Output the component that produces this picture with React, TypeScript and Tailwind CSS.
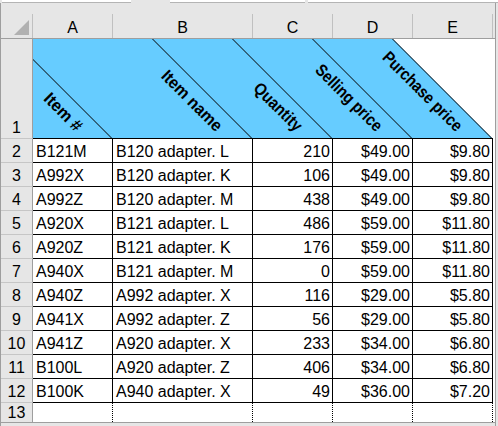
const rows: [string, string, number, string, string][] = [
  ["B121M", "B120 adapter. L", 210, "$49.00", "$9.80"],
  ["A992X", "B120 adapter. K", 106, "$49.00", "$9.80"],
  ["A992Z", "B120 adapter. M", 438, "$49.00", "$9.80"],
  ["A920X", "B121 adapter. L", 486, "$59.00", "$11.80"],
  ["A920Z", "B121 adapter. K", 176, "$59.00", "$11.80"],
  ["A940X", "B121 adapter. M", 0, "$59.00", "$11.80"],
  ["A940Z", "A992 adapter. X", 116, "$29.00", "$5.80"],
  ["A941X", "A992 adapter. Z", 56, "$29.00", "$5.80"],
  ["A941Z", "A920 adapter. X", 233, "$34.00", "$6.80"],
  ["B100L", "A920 adapter. Z", 406, "$34.00", "$6.80"],
  ["B100K", "A940 adapter. X", 49, "$36.00", "$7.20"],
]

// rotated headers: end of baseline sits 36px left of each column's bottom-right corner
const headers = [
  { label: "Item #", x: 42.7, len: 46.5 },
  { label: "Item name", x: 182.7, len: 78.5 },
  { label: "Quantity", x: 262.7, len: 61 },
  { label: "Selling price", x: 342.7, len: 87 },
  { label: "Purchase price", x: 422.7, len: 105 },
]
const corners = [79, 219, 299, 379, 459]

const RowHead = ({ n }: { n: number }) => (
  <div className="w-[32px] h-full shrink-0 border-r border-b border-r-[#9e9e9e] border-b-[#c6c6c6] bg-[#e6e6e6] text-center pt-[4px] leading-[18px]">
    {n}
  </div>
)

const App = () => {
  return (
    <div className="w-[498px] h-[426px] bg-[#e6e6e6] flex flex-col overflow-hidden text-[16px] text-black font-['Liberation_Sans',Arial,sans-serif]">
      {/* bottoms of name box and formula bar */}
      <div className="h-[3px] flex shrink-0">
        <div className="w-[2px] border-b border-[#e6e6e6]" />
        <div className="w-[129px] bg-white border-b border-[#b4b4b4]" />
        <div className="w-[39px]" />
        <div className="w-[135px] bg-white border-b border-[#b4b4b4]" />
        <div className="w-[3px]" />
        <div className="flex-1 bg-white border-b border-[#b4b4b4]" />
      </div>

      <div className="flex flex-1 min-h-0">
        <div className="w-[495px] border-l border-[#9e9e9e] flex flex-col">
          <div className="h-[11px] shrink-0" />

          {/* column letters */}
          <div className="h-[25px] shrink-0 flex border-b border-[#9e9e9e]">
            <div className="w-[32px] border-r border-[#c0c0c0] flex items-end justify-end pr-[3px] pb-[3px]">
              <svg width="15" height="15" viewBox="0 0 15 15">
                <polygon points="0,15 15,0 15,15" fill="#b1b1b1" />
              </svg>
            </div>
            <div className="w-[80px] border-r border-[#c0c0c0] text-center pt-[5px] leading-[18px]">A</div>
            <div className="w-[140px] border-r border-[#c0c0c0] text-center pt-[5px] leading-[18px]">B</div>
            <div className="w-[80px] border-r border-[#c0c0c0] text-center pt-[5px] leading-[18px]">C</div>
            <div className="w-[80px] border-r border-[#c0c0c0] text-center pt-[5px] leading-[18px]">D</div>
            <div className="w-[80px] border-r border-[#c0c0c0] text-center pt-[5px] leading-[18px]">E</div>
            <div className="flex-1" />
          </div>

          {/* row 1: slanted header */}
          <div className="h-[100px] shrink-0 flex">
            <div className="w-[32px] h-full shrink-0 border-r border-b border-r-[#9e9e9e] border-b-[#c6c6c6] flex items-end justify-center pb-[1px] leading-[18px]">
              1
            </div>
            <svg width="460" height="100" viewBox="0 0 460 100" className="shrink-0 bg-white">
              <polygon points="0,0 360,0 460,100 0,100" fill="#66ccff" />
              {corners.map((c) => (
                <line key={c} x1={c + 0.5} y1={100} x2={c + 0.5 - 101} y2={-1} stroke="#000" strokeWidth="1" />
              ))}
              <line x1="0" y1="99.5" x2="460" y2="99.5" stroke="#000" strokeWidth="1" />
              {headers.map((h) => (
                <text
                  key={h.label}
                  x={h.x}
                  y={93.5}
                  transform={`rotate(45 ${h.x} 93.5)`}
                  textAnchor="end"
                  textLength={h.len}
                  lengthAdjust="spacingAndGlyphs"
                  fontSize="17"
                  fontWeight="700"
                  fontFamily="'Liberation Sans', Arial, sans-serif"
                  fill="#000"
                >
                  {h.label}
                </text>
              ))}
            </svg>
            <div className="flex-1 bg-white" />
          </div>

          {rows.map((r, i) => (
            <div key={r[0]} className="h-[24px] shrink-0 flex leading-[18px]">
              <RowHead n={i + 2} />
              <div className="w-[80px] bg-white border-r border-b border-black pl-[3px] pt-[4px] whitespace-nowrap">{r[0]}</div>
              <div className="w-[140px] bg-white border-r border-b border-black pl-[3px] pt-[4px] whitespace-nowrap">{r[1]}</div>
              <div className="w-[80px] bg-white border-r border-b border-black pr-[2px] pt-[4px] text-right">{r[2]}</div>
              <div className="w-[80px] bg-white border-r border-b border-black pr-[2px] pt-[4px] text-right">{r[3]}</div>
              <div className="w-[80px] bg-white border-r border-b border-black pr-[2px] pt-[4px] text-right">{r[4]}</div>
              <div className="flex-1 bg-white" />
            </div>
          ))}

          {/* row 13 */}
          <div className="h-[20px] shrink-0 flex leading-[18px] border-b border-[#9e9e9e]">
            <div className="w-[32px] shrink-0 border-r border-[#9e9e9e] text-center pt-[1px]">13</div>
            <div className="w-[80px] bg-white border-r border-dotted border-black" />
            <div className="w-[140px] bg-white border-r border-dotted border-black" />
            <div className="w-[80px] bg-white border-r border-dotted border-black" />
            <div className="w-[80px] bg-white border-r border-dotted border-black" />
            <div className="w-[80px] bg-white border-r border-dotted border-black" />
            <div className="flex-1 bg-white" />
          </div>
        </div>
        <div className="w-[1px] bg-[#9e9e9e]" />
        <div className="flex-1" />
      </div>
    </div>
  )
}

export default App
